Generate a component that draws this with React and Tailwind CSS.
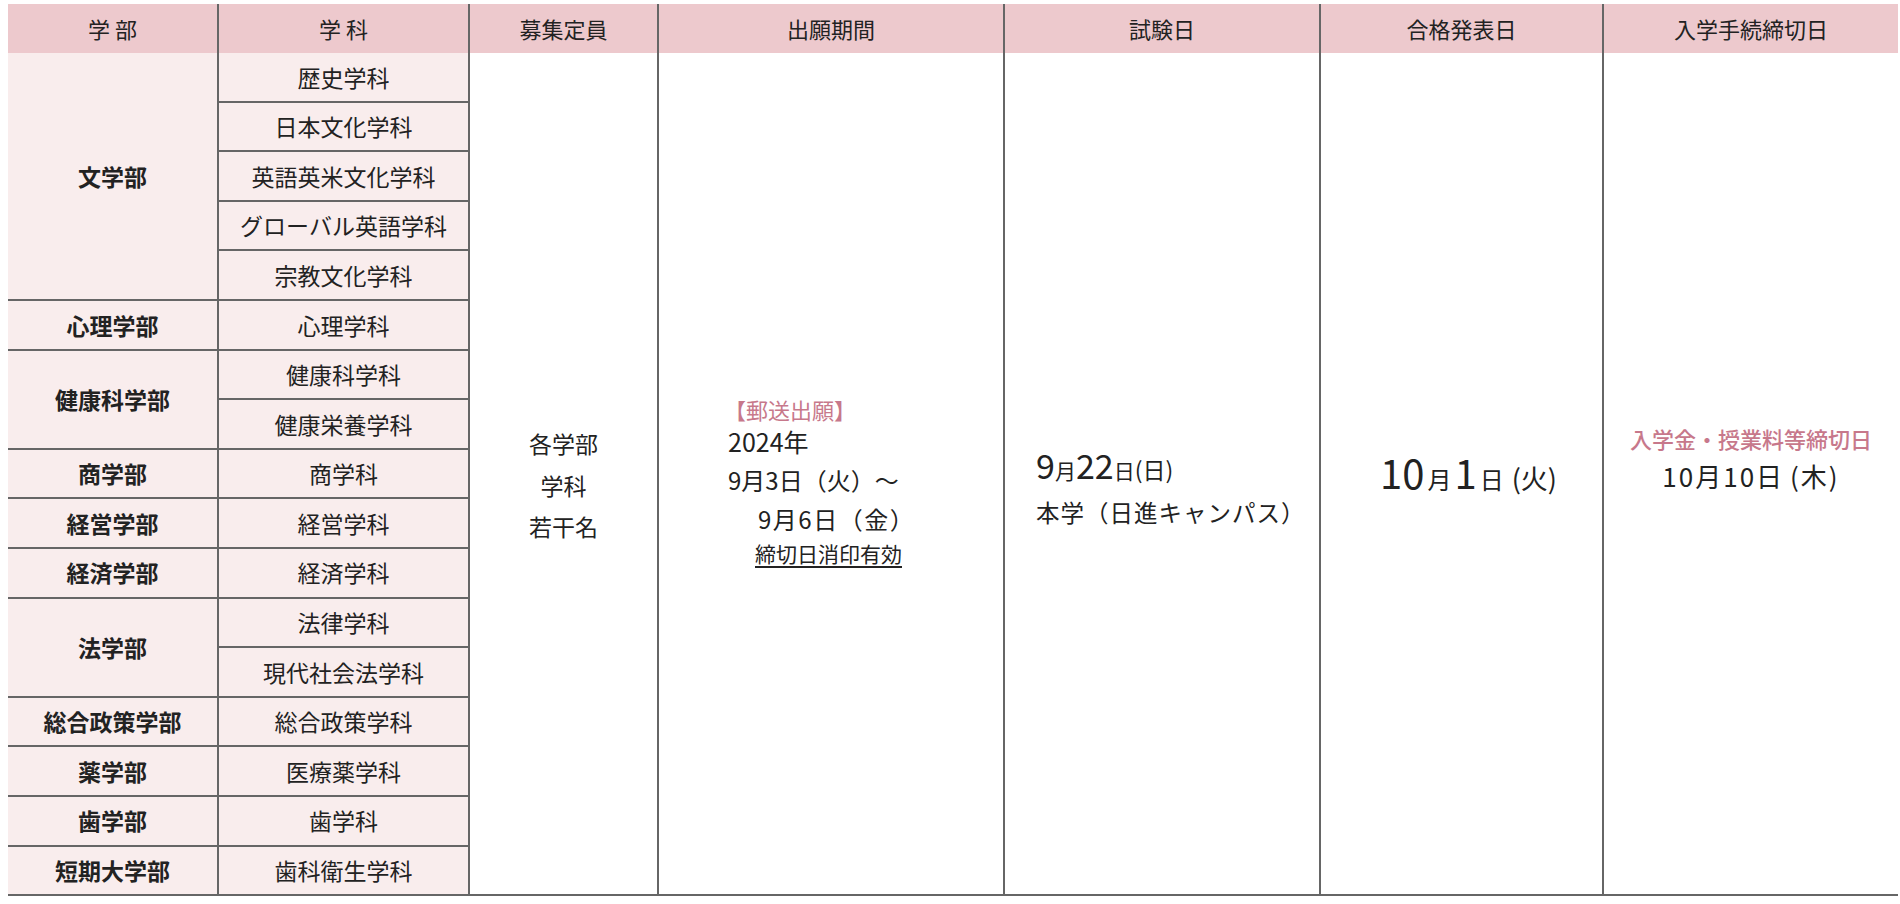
import React from 'react'

const groups = [
  { name: '文学部', subs: ['歴史学科', '日本文化学科', '英語英米文化学科', 'グローバル英語学科', '宗教文化学科'] },
  { name: '心理学部', subs: ['心理学科'] },
  { name: '健康科学部', subs: ['健康科学科', '健康栄養学科'] },
  { name: '商学部', subs: ['商学科'] },
  { name: '経営学部', subs: ['経営学科'] },
  { name: '経済学部', subs: ['経済学科'] },
  { name: '法学部', subs: ['法律学科', '現代社会法学科'] },
  { name: '総合政策学部', subs: ['総合政策学科'] },
  { name: '薬学部', subs: ['医療薬学科'] },
  { name: '歯学部', subs: ['歯学科'] },
  { name: '短期大学部', subs: ['歯科衛生学科'] },
]

const line = 'border-[#666]'

const HeadCell = ({ w, last, children }) => (
  <div
    className={`${w} h-full flex items-center justify-center ${last ? '' : `border-r-2 ${line}`}`}
  >
    {children}
  </div>
)

const App = () => {
  return (
    <div className="w-[1900px] h-[904px] bg-white pt-[4px] pl-[8px] text-[#222] font-['Noto_Sans_CJK_JP',sans-serif]">
      <div className="w-[1890px]">
        {/* header */}
        <div className="flex h-[49px] bg-[#edc9cd] text-[22px]">
          <HeadCell w="w-[211px]">学 部</HeadCell>
          <HeadCell w="w-[251px]">学 科</HeadCell>
          <HeadCell w="w-[189px]">募集定員</HeadCell>
          <HeadCell w="w-[346px]">出願期間</HeadCell>
          <HeadCell w="w-[316px]">試験日</HeadCell>
          <HeadCell w="w-[283px]">合格発表日</HeadCell>
          <HeadCell w="w-[294px]" last>入学手続締切日</HeadCell>
        </div>

        {/* body */}
        <div className="flex">
          <div className="w-[462px] flex flex-col bg-[#f9eded] text-[23px]">
            {groups.map((g) => (
              <div key={g.name} className="flex">
                <div className={`w-[211px] flex items-center justify-center font-bold border-r-2 border-b-2 ${line}`}>
                  {g.name}
                </div>
                <div className="w-[251px] flex flex-col">
                  {g.subs.map((s) => (
                    <div
                      key={s}
                      className={`h-[49.6px] flex items-center justify-center border-r-2 border-b-2 ${line}`}
                    >
                      {s}
                    </div>
                  ))}
                </div>
              </div>
            ))}
          </div>

          {/* 募集定員 */}
          <div className={`w-[189px] flex flex-col items-center justify-center pt-[24px] text-[23px] leading-[41.5px] border-r-2 border-b-2 ${line}`}>
            <span>各学部</span>
            <span>学科</span>
            <span>若干名</span>
          </div>

          {/* 出願期間 */}
          <div className={`w-[346px] flex flex-col items-start justify-center pl-[69px] pt-[17px] border-r-2 border-b-2 ${line}`}>
            <div className="h-[32px] flex items-center text-[22px] text-[#c7788b] -ml-[4px]">【郵送出願】</div>
            <div className="h-[34px] flex items-center text-[25px]">2024年</div>
            <div className="h-[42px] flex items-center text-[24px]">9月3日（火）〜</div>
            <div className="h-[36px] flex items-center text-[24px] tracking-[1.5px] pl-[30px]">9月6日（金）</div>
            <div className="h-[34px] flex items-center text-[21px] pl-[27px]">
              <span className="underline underline-offset-4">締切日消印有効</span>
            </div>
          </div>

          {/* 試験日 */}
          <div className={`w-[316px] flex flex-col items-start justify-center pl-[31px] pt-[33px] border-r-2 border-b-2 ${line}`}>
            <div className="h-[46px] pt-[4px] flex items-baseline leading-none">
              <span className="text-[34px]">9</span>
              <span className="text-[21px]">月</span>
              <span className="text-[34px]">22</span>
              <span className="text-[21px]">日</span>
              <span className="text-[23px]">(日)</span>
            </div>
            <div className="h-[46px] flex items-center text-[23.5px] tracking-[1px]">本学（日進キャンパス）</div>
          </div>

          {/* 合格発表日 */}
          <div className={`w-[283px] flex flex-col items-center justify-center pt-[3px] pl-[14px] border-r-2 border-b-2 ${line}`}>
            <div className="h-[46px] flex items-baseline gap-[3px] leading-none">
              <span className="text-[40px]">10</span>
              <span className="text-[24px]">月</span>
              <span className="text-[40px]">1</span>
              <span className="text-[24px]">日</span>
              <span className="text-[27px] ml-[5px]">(火)</span>
            </div>
          </div>

          {/* 入学手続締切日 */}
          <div className={`w-[294px] flex flex-col items-center justify-center pb-[34px] border-b-2 ${line}`}>
            <div className="h-[37px] flex items-center text-[22px] font-medium text-[#c7788b]">入学金・授業料等締切日</div>
            <div className="h-[37px] flex items-center text-[26px] tracking-[2px]">
              10月10日<span className="ml-[6px]">(木)</span>
            </div>
          </div>
        </div>
      </div>
    </div>
  )
}

export default App
